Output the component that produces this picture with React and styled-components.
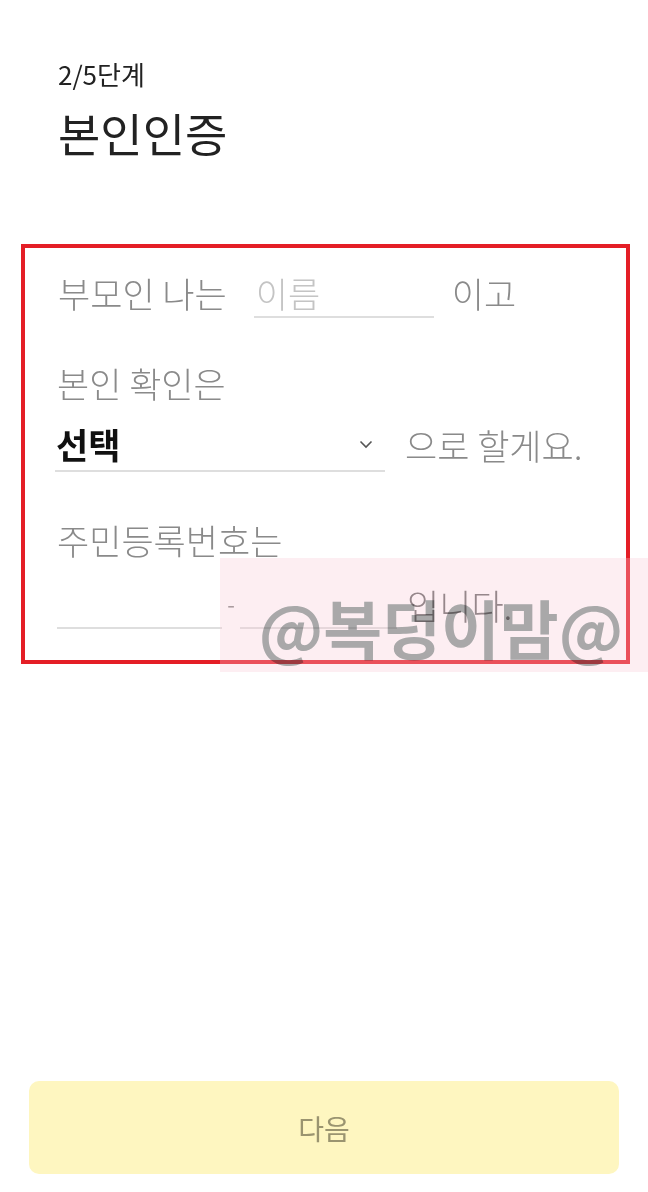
import styled, { createGlobalStyle } from "styled-components";

const GlobalStyle = createGlobalStyle`
  html, body {
    margin: 0;
    padding: 0;
    background: #fff;
  }
  body {
    font-family: "Noto Sans CJK KR", "Noto Sans", sans-serif;
  }
  * {
    box-sizing: border-box;
  }
`;

const Page = styled.div`
  position: relative;
  min-height: 100vh;
  display: flex;
  flex-direction: column;
`;

const Header = styled.header`
  padding: 56px 0 0 58px;
  display: flex;
  flex-direction: column;
  gap: 10px;
`;

const Step = styled.div`
  font-size: 26px;
  line-height: 36px;
  color: #222;
`;

const Title = styled.h1`
  margin: 0;
  font-size: 46px;
  line-height: 60px;
  font-weight: 400;
  color: #222;
`;

const FormBox = styled.section`
  margin: 82px 0 0 21px;
  width: 609px;
  border: 4px solid #e41e26;
  padding: 20px 0 31px 30px;
  display: flex;
  flex-direction: column;
`;

const Row = styled.div`
  display: flex;
  align-items: center;
  height: ${(p) => p.$h || 50}px;
  margin-top: ${(p) => p.$mt || 0}px;
`;

const Text = styled.span`
  font-size: 35px;
  font-weight: 300;
  line-height: 44px;
  color: ${(p) => (p.$dark ? "#6c6c6c" : "#8a8a8a")};
  white-space: nowrap;
  margin-left: ${(p) => p.$ml || 0}px;
`;

const Label = styled.div`
  font-size: 35px;
  font-weight: 300;
  line-height: 44px;
  color: #8a8a8a;
  margin: ${(p) => p.$mt || 0}px 0 0 2px;
`;

const Field = styled.div`
  align-self: flex-end;
  width: ${(p) => p.$w}px;
  height: 100%;
  margin-left: ${(p) => p.$ml || 0}px;
  border-bottom: 2px solid #dedede;
  display: flex;
  align-items: center;
  font-size: 35px;
  font-weight: 300;
  color: #c4c4c4;
  padding-left: 2px;
`;

const Select = styled.div`
  width: 330px;
  height: 100%;
  border-bottom: 2px solid #dedede;
  display: flex;
  align-items: center;
  justify-content: space-between;
  padding: 0 12px 0 1px;
`;

const SelectValue = styled.span`
  font-size: 35px;
  font-weight: 700;
  color: #111;
  line-height: 44px;
`;

const Dash = styled.span`
  font-size: 22px;
  color: #888;
  width: 18px;
  text-align: center;
  align-self: center;
  margin-top: -4px;
`;

const Footer = styled.footer`
  margin-top: auto;
  padding: 0 29px 18px;
`;

const NextButton = styled.button`
  width: 590px;
  height: 93px;
  border: none;
  border-radius: 10px;
  background: #fef6c0;
  color: #9a9470;
  font-family: inherit;
  font-size: 28px;
`;

const Watermark = styled.div`
  position: absolute;
  left: 220px;
  top: 558px;
  width: 428px;
  height: 114px;
  background: rgba(248, 198, 212, 0.3);
  display: flex;
  align-items: center;
  justify-content: center;
  padding: 22px 0 0 14px;
  pointer-events: none;
`;

const WatermarkText = styled.span`
  font-size: 64px;
  font-weight: 700;
  color: #aab4b2;
  mix-blend-mode: multiply;
  white-space: nowrap;
`;

const Chevron = () => (
  <svg width="14" height="9" viewBox="0 0 14 9" fill="none">
    <path d="M1.5 1.5 L7 7 L12.5 1.5" stroke="#555" strokeWidth="1.6" />
  </svg>
);

export default function App() {
  return (
    <Page>
      <GlobalStyle />
      <Header>
        <Step>2/5단계</Step>
        <Title>본인인증</Title>
      </Header>

      <FormBox>
        <Row $h={50}>
          <Text $ml={3}>부모인 나는</Text>
          <Field $w={180} $ml={27}>이름</Field>
          <Text $ml={18}>이고</Text>
        </Row>

        <Label $mt={43}>본인 확인은</Label>

        <Row $h={54} $mt={13}>
          <Select>
            <SelectValue>선택</SelectValue>
            <Chevron />
          </Select>
          <Text $ml={20}>으로 할게요.</Text>
        </Row>

        <Label $mt={46}>주민등록번호는</Label>

        <Row $h={49} $mt={18}>
          <Field $w={165} $ml={2} />
          <Dash>-</Dash>
          <Field $w={157} />
          <Text $ml={10} $dark>입니다.</Text>
        </Row>
      </FormBox>

      <Footer>
        <NextButton>다음</NextButton>
      </Footer>

      <Watermark>
        <WatermarkText>@복덩이맘@</WatermarkText>
      </Watermark>
    </Page>
  );
}
